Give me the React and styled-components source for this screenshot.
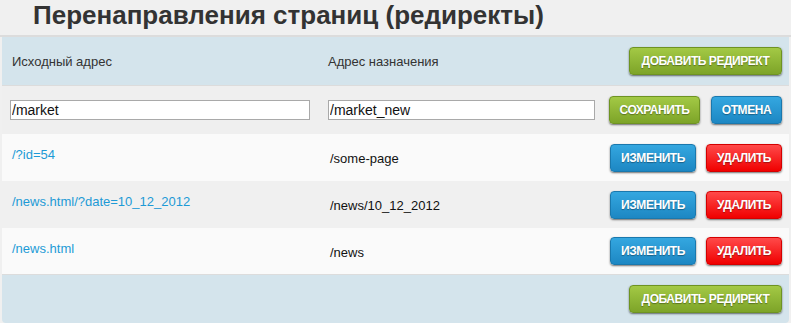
import React from "react";
import styled, { createGlobalStyle, css } from "styled-components";

const Global = createGlobalStyle`
  html, body { margin: 0; padding: 0; background: #f0f0f0; }
  body { font-family: "Liberation Sans", Arial, sans-serif; color: #333; }
`;

const Page = styled.div`
  width: 791px;
  height: 323px;
  overflow: hidden;
  background: #f0f0f0;
`;

const Title = styled.h1`
  margin: 0;
  padding: 0 0 0 33px;
  height: 37px;
  box-sizing: border-box;
  font-size: 26px;
  font-weight: bold;
  color: #333;
  line-height: 30px;
  border-bottom: 2px solid #dcdcdc;
`;

const Table = styled.div`
  margin: 0 2px;
  border-radius: 0 0 4px 4px;
  overflow: hidden;
`;

const tones = {
  head: "#d4e4ec",
  edit: "#efefef",
  light: "#fafafa",
  gray: "#f0f0f0",
};

const Row = styled.div`
  display: grid;
  grid-template-columns: 316px 1fr auto;
  align-items: center;
  height: ${(p) => p.$h || 47}px;
  padding: 0 7px 0 10px;
  background: ${(p) => tones[p.$tone]};
  border-bottom: ${(p) => (p.$line ? "1px solid #dcdcdc" : "none")};
  box-sizing: border-box;
`;

const HeadCell = styled.div`
  font-size: 13px;
  color: #333;
`;

const LinkCell = styled.a`
  font-size: 13px;
  color: #1d9ad6;
  text-decoration: none;
  align-self: start;
  padding-top: 13px;
`;

const ValueCell = styled.div`
  font-size: 13px;
  color: #111;
  padding-left: 2px;
  padding-top: 2px;
`;

const Input = styled.input`
  box-sizing: border-box;
  width: ${(p) => p.$w}px;
  height: 20px;
  margin-left: ${(p) => p.$ml || 0}px;
  border: 1px solid #a9a9a9;
  background: #fff;
  font-family: "Liberation Sans", Arial, sans-serif;
  font-size: 14px;
  color: #111;
  padding: 0 1px;
  outline: none;
`;

const Actions = styled.div`
  display: flex;
  gap: ${(p) => p.$gap || 10}px;
  justify-content: flex-end;
`;

const variants = {
  green: css`
    background: linear-gradient(#a3c945, #7da428);
    border-color: #6e9322;
  `,
  blue: css`
    background: linear-gradient(#34a7e0, #1d87c3);
    border-color: #1a78ad;
  `,
  red: css`
    background: linear-gradient(#ff4a4a, #f00000);
    border-color: #d40000;
  `,
};

const Button = styled.button`
  box-sizing: border-box;
  height: 28px;
  width: ${(p) => p.$w}px;
  padding: 0;
  border: 1px solid;
  border-radius: 4px;
  ${(p) => variants[p.$v]};
  box-shadow: 0 1px 2px rgba(0, 0, 0, 0.55);
  color: #fff;
  font-family: "Liberation Sans", Arial, sans-serif;
  font-size: 12px;
  font-weight: bold;
  letter-spacing: -0.45px;
  text-transform: uppercase;
  text-shadow: 0 1px 1px rgba(0, 0, 0, 0.35);
  cursor: pointer;
`;

const rows = [
  { from: "/?id=54", to: "/some-page", tone: "light" },
  { from: "/news.html/?date=10_12_2012", to: "/news/10_12_2012", tone: "gray" },
  { from: "/news.html", to: "/news", tone: "light", line: true },
];

export default function App() {
  return (
    <Page>
      <Global />
      <Title>Перенаправления страниц (редиректы)</Title>
      <Table>
        <Row $tone="head" $h={49} $line>
          <HeadCell>Исходный адрес</HeadCell>
          <HeadCell>Адрес назначения</HeadCell>
          <Button $v="green" $w={153}>Добавить редирект</Button>
        </Row>
        <Row $tone="edit" $h={48}>
          <Input $w={300} $ml={-2} defaultValue="/market" />
          <Input $w={267} defaultValue="/market_new" />
          <Actions $gap={11}>
            <Button $v="green" $w={91}>Сохранить</Button>
            <Button $v="blue" $w={71}>Отмена</Button>
          </Actions>
        </Row>
        {rows.map((r) => (
          <Row key={r.from} $tone={r.tone} $line={r.line}>
            <LinkCell href="#">{r.from}</LinkCell>
            <ValueCell>{r.to}</ValueCell>
            <Actions>
              <Button $v="blue" $w={86}>Изменить</Button>
              <Button $v="red" $w={76}>Удалить</Button>
            </Actions>
          </Row>
        ))}
        <Row $tone="head" $h={48}>
          <span />
          <span />
          <Button $v="green" $w={153}>Добавить редирект</Button>
        </Row>
      </Table>
    </Page>
  );
}
